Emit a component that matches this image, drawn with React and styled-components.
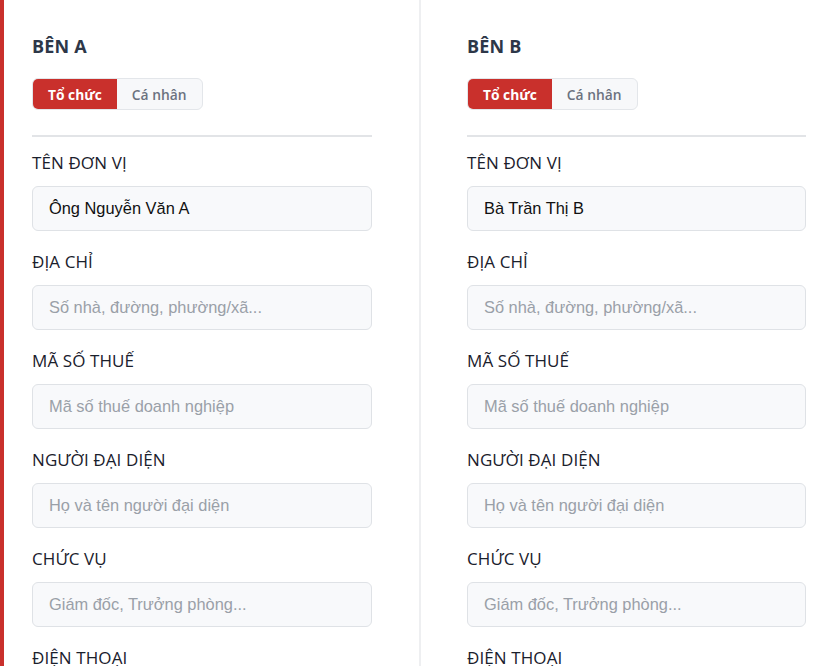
import React, { useState } from "react"
import styled, { createGlobalStyle } from "styled-components"

const GlobalStyle = createGlobalStyle`
  html, body {
    margin: 0;
    padding: 0;
    background: #ffffff;
  }
  body {
    font-family: "Open Sans", "Noto Sans", sans-serif;
  }
`

const Page = styled.div`
  display: grid;
  grid-template-columns: 417px 1fr;
  border-left: 4px solid #c9302c;
  box-sizing: border-box;
  overflow: hidden;
  height: 666px;
`

const Party = styled.section`
  padding: ${({ side }) => (side === "A" ? "26px 47px 0 28px" : "26px 19px 0 46px")};
  border-right: ${({ side }) => (side === "A" ? "2px solid #eeeff1" : "none")};
  display: flex;
  flex-direction: column;
`

const Heading = styled.h2`
  margin: 0 0 12px;
  font-size: 18px;
  line-height: 40px;
  font-weight: 700;
  color: #2d3748;
  letter-spacing: 0.2px;
`

const Toggle = styled.div`
  display: flex;
  align-self: flex-start;
  border: 1px solid #e3e6ea;
  border-radius: 6px;
  overflow: hidden;
  background: #f7f8fa;
`

const ToggleButton = styled.button`
  border: none;
  margin: 0;
  height: 30px;
  padding: 0 15px;
  font-family: "Open Sans", "Noto Sans", sans-serif;
  font-size: 13.8px;
  font-weight: ${({ active }) => (active ? 700 : 600)};
  color: ${({ active }) => (active ? "#ffffff" : "#6b7280")};
  background: ${({ active }) => (active ? "#c9302c" : "transparent")};
  cursor: pointer;
`

const Rule = styled.hr`
  border: none;
  border-top: 2px solid #e2e4e7;
  margin: 25px 0 13px;
  width: 100%;
`

const Field = styled.div`
  display: flex;
  flex-direction: column;
  margin-bottom: 18px;
`

const Label = styled.label`
  font-size: 17px;
  line-height: 25px;
  font-weight: 500;
  color: #1a202c;
  margin-bottom: 11px;
  letter-spacing: 0.1px;
`

const Input = styled.input`
  box-sizing: border-box;
  height: 45px;
  width: 100%;
  padding: 0 16px;
  border: 1px solid #dfe2e6;
  border-radius: 6px;
  background: #f8f9fb;
  font-family: "Liberation Sans", Arial, sans-serif;
  font-size: 16.4px;
  color: #111111;
  outline: none;

  &::placeholder {
    color: #9aa0a8;
  }
`

const fields = [
  { key: "name", label: "TÊN ĐƠN VỊ", placeholder: "" },
  { key: "address", label: "ĐỊA CHỈ", placeholder: "Số nhà, đường, phường/xã..." },
  { key: "tax", label: "MÃ SỐ THUẾ", placeholder: "Mã số thuế doanh nghiệp" },
  { key: "rep", label: "NGƯỜI ĐẠI DIỆN", placeholder: "Họ và tên người đại diện" },
  { key: "position", label: "CHỨC VỤ", placeholder: "Giám đốc, Trưởng phòng..." },
  { key: "phone", label: "ĐIỆN THOẠI", placeholder: "Số điện thoại liên hệ" },
]

const PartyForm = ({ side, defaultName }) => {
  const [type, setType] = useState("org")
  const [values, setValues] = useState({ name: defaultName })

  return (
    <Party side={side}>
      <Heading>BÊN {side}</Heading>
      <Toggle>
        <ToggleButton active={type === "org"} onClick={() => setType("org")}>
          Tổ chức
        </ToggleButton>
        <ToggleButton active={type === "person"} onClick={() => setType("person")}>
          Cá nhân
        </ToggleButton>
      </Toggle>
      <Rule />
      {fields.map((f) => (
        <Field key={f.key}>
          <Label>{f.label}</Label>
          <Input
            value={values[f.key] || ""}
            placeholder={f.placeholder}
            onChange={(e) => setValues({ ...values, [f.key]: e.target.value })}
          />
        </Field>
      ))}
    </Party>
  )
}

export default function App() {
  return (
    <>
      <GlobalStyle />
      <Page>
        <PartyForm side="A" defaultName="Ông Nguyễn Văn A" />
        <PartyForm side="B" defaultName="Bà Trần Thị B" />
      </Page>
    </>
  )
}
